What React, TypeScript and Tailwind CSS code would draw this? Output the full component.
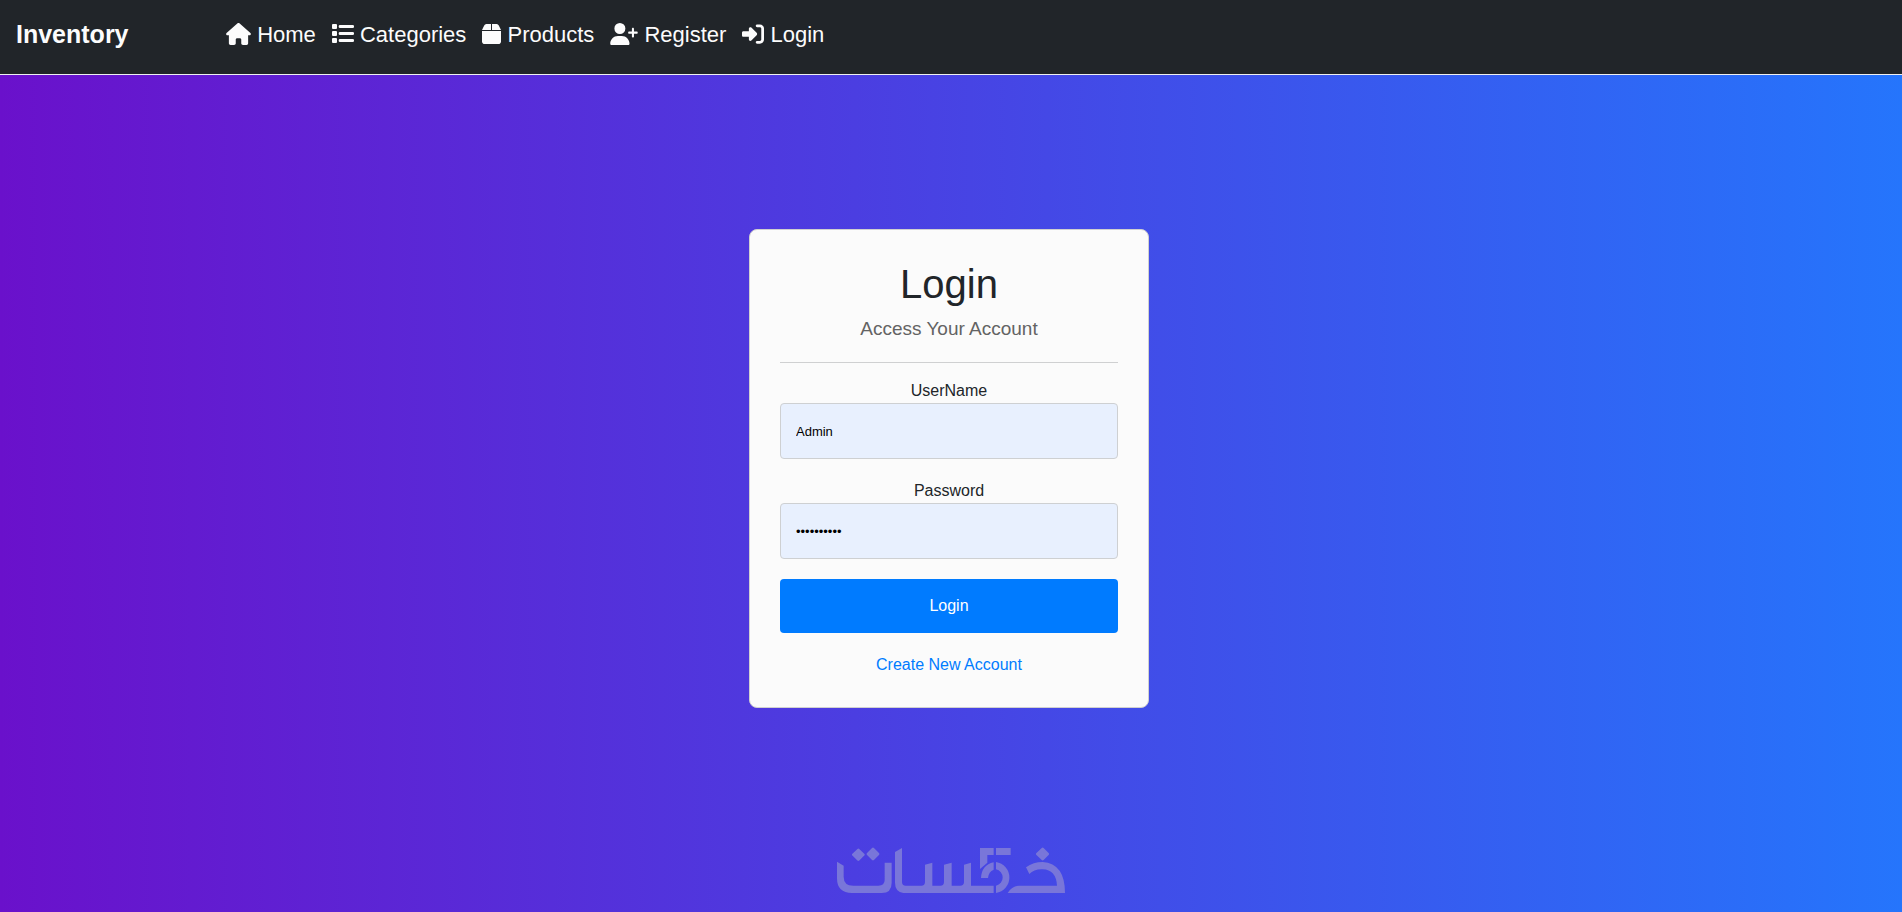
import type { ReactNode } from 'react';
import { FaHouse, FaUserPlus, FaRightToBracket } from 'react-icons/fa6';

function ListIcon() {
  return (
    <svg viewBox="0 0 22 22" className="inline h-[22px] w-[22px] align-[-3px]" fill="currentColor" aria-hidden="true">
      {[1, 8, 15].map((y) => (
        <g key={y}>
          <rect x="0" y={y} width="5" height="5" rx="1" />
          <rect x="6.7" y={y + 1} width="15.3" height="3" rx="1.3" />
        </g>
      ))}
    </svg>
  );
}

function BoxIcon() {
  return (
    <svg viewBox="0 0 19 22" className="inline h-[22px] w-[19px] align-[-3px]" fill="currentColor" aria-hidden="true">
      <path d="M0 7 L2.2 2.5 Q2.9 1 4.3 1 H9 V7Z M10 7 V1 H14.7 Q16.1 1 16.8 2.5 L19 7Z" />
      <path d="M0 8 H19 V18.2 Q19 21 16.2 21 H2.8 Q0 21 0 18.2Z" />
    </svg>
  );
}

function NavItem({ icon, label }: { icon: ReactNode; label: string }) {
  return (
    <li>
      <a href="#" className="block px-2 text-[22px] leading-[34px] text-[#fcfcfc]">
        {icon} {label}
      </a>
    </li>
  );
}

function Logo() {
  return (
    <svg viewBox="3 0 780 246" className="h-[82px] w-[260px]" fill="#7976d9" role="img" aria-label="خمسات">
      <path d="M51 95 L71 107 V140 Q71 167 100 167 H175 Q194 167 194 150 V98 H215 V158 Q215 189 185 189 H96 Q51 189 51 145Z" />
      <path
        d="M115 60 L130 74 L115 89 L100 74Z M159 57 L174 72 L159 87 L144 72Z M668 57 L683 72 L668 87 L652 72Z"
        stroke="#7976d9"
        strokeWidth="8"
        strokeLinejoin="round"
      />
      <path d="M225 66 L246 54 V156 Q246 167 257 167 H304 Q315 167 315 156 V104 L337 98 V167 H361 Q372 167 372 156 V104 L395 98 V167 H420 Q432 167 432 156 V104 L453 98 V167 H521 V189 H250 Q225 185 225 158Z" />
      <path d="M480 54 H521 V75 H502 V98 L480 117Z M528 54 H572 V75 H528Z" />
      <path d="M521 97 V119 Q506 124 504 144 H483 Q485 105 521 97Z M528 96 A47 47 0 0 1 528 189 V167 A25 25 0 0 0 528 118Z" />
      <path d="M563 189 Q576 167 598 167 H711 Q708 119 668 118 Q642 117 628 132 L618 112 Q640 96 668 96 Q735 101 735 189Z" />
    </svg>
  );
}

const inputClass =
  'block h-14 w-full rounded border border-[#ced0d2] bg-[#e8f0fe] px-[15px] text-[13px] text-black outline-none';

export default function App() {
  return (
    <div className="flex min-h-screen flex-col bg-linear-to-r/srgb from-[#6a11cb] to-[#2575fc] font-['Liberation_Sans',Arial,sans-serif] text-base text-[#212529]">
      <header className="flex items-start border-b border-[#f0f0f0] bg-[#212529] pt-[18px] pb-[22px]">
        <a href="#" className="w-[218px] pl-4 text-[25px] leading-8 font-bold text-[#fcfcfc]">
          Inventory
        </a>
        <nav>
          <ul className="flex">
            <NavItem icon={<FaHouse className="inline h-[22px] w-[25px] align-[-3px]" />} label="Home" />
            <NavItem icon={<ListIcon />} label="Categories" />
            <NavItem icon={<BoxIcon />} label="Products" />
            <NavItem icon={<FaUserPlus className="inline h-[22px] w-7 align-[-3px]" />} label="Register" />
            <NavItem icon={<FaRightToBracket className="inline h-[22px] w-[22px] align-[-3px]" />} label="Login" />
          </ul>
        </nav>
      </header>

      <main className="flex grow flex-col items-center justify-between pt-[154px]">
        <div className="flex w-full justify-center pr-1">
          <form
            className="w-full max-w-[400px] rounded-lg border border-[#d0d0d0] bg-[#fbfbfb] p-[30px] text-center"
            onSubmit={(e) => e.preventDefault()}
          >
            <h1 className="mb-2 text-[40px] leading-12">Login</h1>
            <p className="text-[19px] leading-[26px] text-[#636363]">Access Your Account</p>
            <hr className="mt-5 mb-4 border-[#cfd0d1]" />
            <div className="mb-5">
              <label htmlFor="username" className="block leading-6">
                UserName
              </label>
              <input id="username" type="text" defaultValue="Admin" className={inputClass} />
            </div>
            <div className="mb-5">
              <label htmlFor="password" className="block leading-6">
                Password
              </label>
              <input id="password" type="password" defaultValue="password12" className={inputClass} />
            </div>
            <button type="submit" className="mb-5 block h-[54px] w-full rounded bg-[#007bff] text-white">
              Login
            </button>
            <a href="#" className="block leading-6 text-[#007bff]">
              Create New Account
            </a>
          </form>
        </div>
        <Logo />
      </main>
    </div>
  );
}
